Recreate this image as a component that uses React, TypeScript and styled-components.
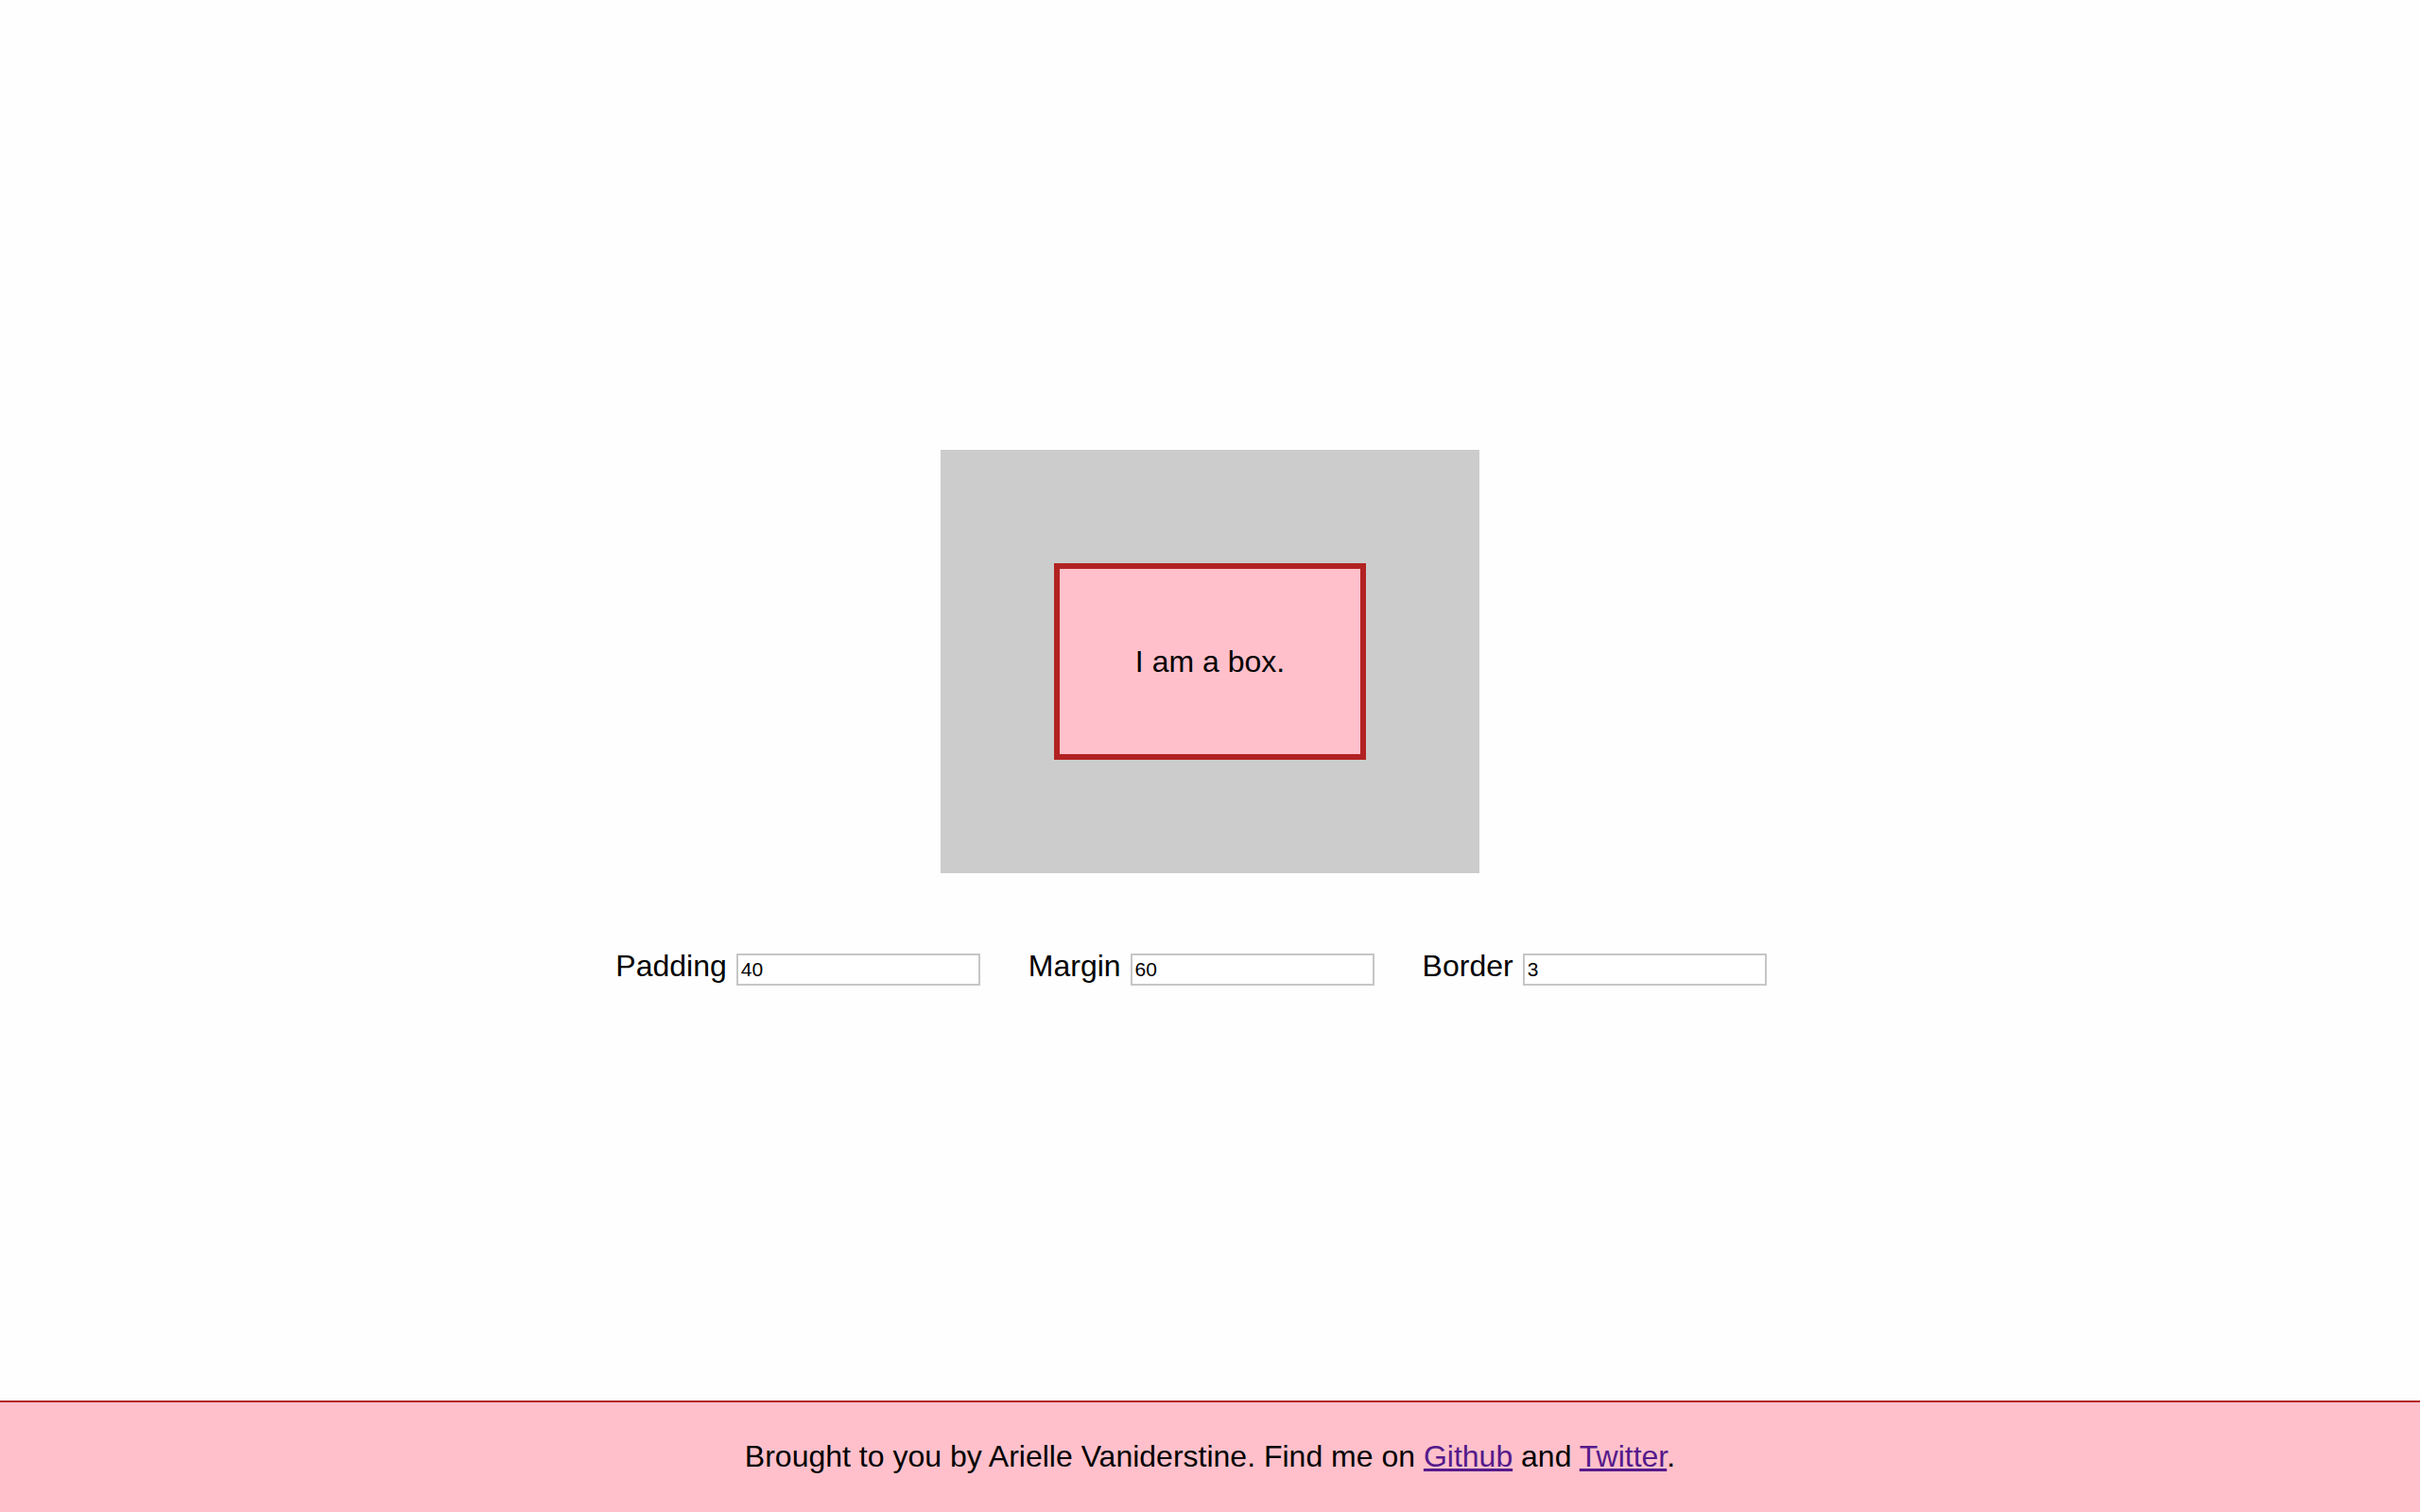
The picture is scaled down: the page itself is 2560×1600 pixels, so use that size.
import styled, { createGlobalStyle } from 'styled-components';
import { useState } from 'react';

const GlobalStyle = createGlobalStyle`
  html, body {
    margin: 0;
    padding: 0;
    background: #fefefe;
    font-family: "Liberation Sans", Arial, sans-serif;
    color: #000000;
  }
`;

const Page = styled.div`
  min-height: 100vh;
  display: flex;
  flex-direction: column;
`;

const Main = styled.main`
  flex: 1;
  display: flex;
  flex-direction: column;
  align-items: center;
  padding-top: 476px;
`;

const Stage = styled.div`
  background: #cccccc;
  display: flex;
`;

// values from the inputs are drawn at 2x
const Box = styled.div<{ $padding: number; $margin: number; $border: number }>`
  background: #ffc0cb;
  border: ${p => p.$border * 2}px solid #b22222;
  padding: ${p => p.$padding * 2}px;
  margin: ${p => p.$margin * 2}px;
  font-size: 32px;
  line-height: 36px;
  white-space: nowrap;
`;

const Controls = styled.div`
  display: flex;
  align-items: baseline;
  gap: 11px;
  margin-top: 80px;
`;

const Field = styled.label`
  display: flex;
  align-items: baseline;
  margin-right: 40px;
  font-size: 32px;
`;

const FieldName = styled.span`
  margin-right: 10px;
`;

const NumberInput = styled.input`
  box-sizing: border-box;
  width: 258px;
  height: 34px;
  padding: 0 3px;
  border: 2px solid #c6c6c6;
  border-radius: 0;
  background: #ffffff;
  font-family: "Liberation Sans", Arial, sans-serif;
  font-size: 21px;
  color: #000000;
  outline: none;
`;

const Footer = styled.footer`
  background: #ffc0cb;
  border-top: 2px solid #b22222;
  padding: 39px 0 40px;
  text-align: center;
  font-size: 32px;
  line-height: 37px;
`;

const Link = styled.a`
  color: #551a8b;
  text-decoration: underline;
`;

export default function App() {
  const [padding, setPadding] = useState('40');
  const [margin, setMargin] = useState('60');
  const [border, setBorder] = useState('3');

  return (
    <Page>
      <GlobalStyle />
      <Main>
        <Stage>
          <Box
            $padding={Number(padding) || 0}
            $margin={Number(margin) || 0}
            $border={Number(border) || 0}
          >
            I am a box.
          </Box>
        </Stage>
        <Controls>
          <Field>
            <FieldName>Padding</FieldName>
            <NumberInput value={padding} onChange={e => setPadding(e.target.value)} />
          </Field>
          <Field>
            <FieldName>Margin</FieldName>
            <NumberInput value={margin} onChange={e => setMargin(e.target.value)} />
          </Field>
          <Field>
            <FieldName>Border</FieldName>
            <NumberInput value={border} onChange={e => setBorder(e.target.value)} />
          </Field>
        </Controls>
      </Main>
      <Footer>
        Brought to you by Arielle Vaniderstine. Find me on <Link href="#">Github</Link> and{' '}
        <Link href="#">Twitter</Link>.
      </Footer>
    </Page>
  );
}
